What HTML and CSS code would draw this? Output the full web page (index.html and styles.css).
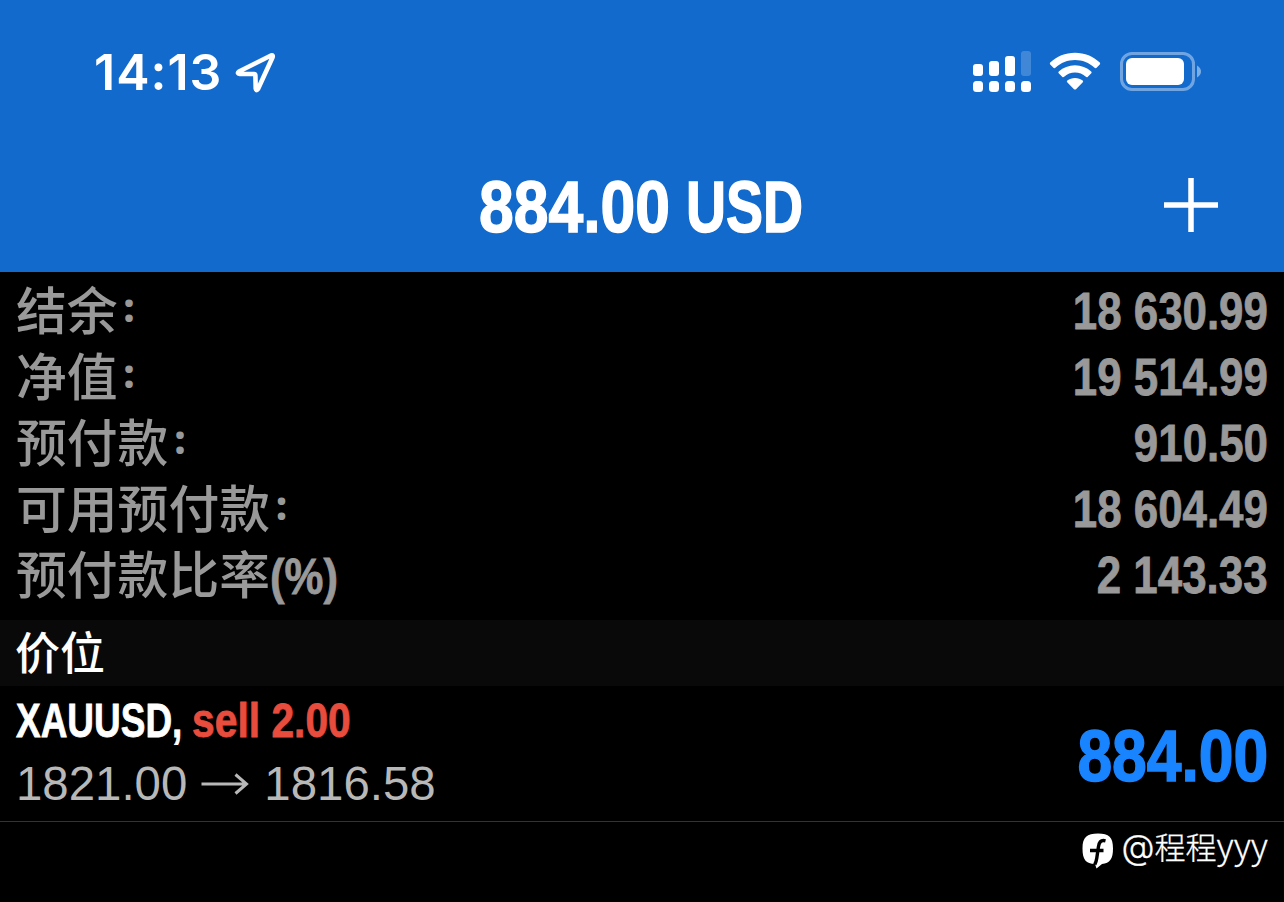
FILE: index.html
```
<!DOCTYPE html>
<html lang="zh-CN">
<head>
  <meta charset="UTF-8" />
  <meta name="viewport" content="width=device-width, initial-scale=1.0"/>
  <title>884.00 USD</title>
  <link rel="stylesheet" href="styles.css">
</head>
<body>
  <header class="header">
    <div class="status-bar">
      <div class="status-left">
        <span class="time">14:13</span>
        <svg class="location" width="44" height="44" viewBox="0 0 44 44">
          <path d="M6 21.500 L38 5.500 Q40.500 4.800 39.500 7.500 L25 39 Q23.300 41.500 22.700 38.500 L22.400 25.500 Q22.400 24 21 24 L7 24 Q3.500 23.400 6 21.500 Z" fill="none" stroke="#fff" stroke-width="4.600" stroke-linejoin="round"/>
        </svg>
      </div>
      <div class="status-right">
        <svg width="60" height="44" viewBox="0 0 60 44" fill="#fff">
          <rect x="1" y="14" width="10" height="12" rx="3"/>
          <rect x="17" y="11" width="10" height="15" rx="3"/>
          <rect x="33" y="6" width="10" height="20" rx="3"/>
          <rect x="49" y="1" width="10" height="25" rx="3" opacity="0.2"/>
          <rect x="1" y="31" width="10" height="11" rx="3.5"/>
          <rect x="17" y="31" width="10" height="11" rx="3.5"/>
          <rect x="33" y="31" width="10" height="11" rx="3.5"/>
          <rect x="49" y="31" width="10" height="11" rx="3.5"/>
        </svg>
        <svg class="wifi" width="52" height="44" viewBox="0 0 52 44" fill="#fff">
          <path d="M26 2.8 C16.500 2.8 7.500 6.500 1.200 12.600 Q.4 13.600 1.200 14.500 L4.700 17.900 Q5.500 18.500 6.400 17.700 C11.800 12.700 18.700 10 26 10 C33.300 10 40.200 12.700 45.600 17.700 Q46.500 18.500 47.300 17.900 L50.800 14.500 Q51.600 13.600 50.800 12.600 C44.500 6.500 35.500 2.800 26 2.800 Z"/>
          <path d="M26 15.300 C19.800 15.300 14.200 17.600 9.800 21.500 Q8.900 22.400 9.700 23.300 L13.400 26.900 Q14.200 27.500 15.100 26.800 C18.100 24.100 21.900 22.600 26 22.600 C30.100 22.600 33.900 24.100 36.900 26.800 Q37.800 27.500 38.600 26.900 L42.300 23.300 Q43.100 22.400 42.200 21.500 C37.800 17.600 32.200 15.300 26 15.300 Z"/>
          <path d="M26 27.900 C23.100 27.900 20.400 28.900 18.300 30.600 Q17.400 31.500 18.200 32.300 L25 39.200 Q26 40 27 39.200 L33.800 32.300 Q34.600 31.500 33.700 30.600 C31.600 28.900 28.900 27.900 26 27.900 Z"/>
        </svg>
        <svg class="battery" width="84" height="44" viewBox="0 0 84 44">
          <rect x="3.500" y="3.500" width="72" height="36" rx="10.500" fill="none" stroke="#fff" stroke-width="3" opacity="0.4"/>
          <rect x="8" y="8" width="58" height="27" rx="6" fill="#fff"/>
          <path d="M79 15.500 Q83 18 83 21.500 Q83 25 79 27.500 Z" fill="#fff" opacity="0.45"/>
        </svg>
      </div>
    </div>
    <div class="title-bar">
      <h1 class="title"><span class="cond title-num">884.00</span><span class="cond title-cur">USD</span></h1>
      <svg class="add" width="54" height="54" viewBox="0 0 54 54">
        <path d="M27 0 V54 M0 27 H54" stroke="#fff" stroke-width="5.500"/>
      </svg>
    </div>
  </header>

  <main>
    <div class="summary">
      <div class="row"><span class="label">结余<span class="colon">：</span></span><span class="value">18 630.99</span></div>
      <div class="row"><span class="label">净值<span class="colon">：</span></span><span class="value">19 514.99</span></div>
      <div class="row"><span class="label">预付款<span class="colon">：</span></span><span class="value">910.50</span></div>
      <div class="row"><span class="label">可用预付款<span class="colon">：</span></span><span class="value">18 604.49</span></div>
      <div class="row"><span class="label">预付款比率<span class="cond percent">(%)</span></span><span class="value">2 143.33</span></div>
    </div>

    <h2 class="section-title">价位</h2>

    <div class="position">
      <div class="position-info">
        <div class="order"><span class="cond symbol">XAUUSD,</span><span class="cond side">sell 2.00</span></div>
        <div class="prices">
          <span>1821.00</span>
          <svg class="arrow" width="48" height="24" viewBox="0 0 48 24">
            <path d="M0.500 12 H45 M34.500 2.500 L45.500 12 L34.500 21.500" fill="none" stroke="#b8b8b8" stroke-width="3"/>
          </svg>
          <span>1816.58</span>
        </div>
      </div>
      <div class="profit">884.00</div>
    </div>
  </main>

  <footer class="author">
    <svg width="32" height="36" viewBox="0 0 32 36">
      <path d="M16 .5 C27 .5 31 4 31 15.500 C31 26 28 30 20 31 L14.500 35.500 L13 31 C4 30.500 .5 27 .5 15.500 C.5 4 5 .5 16 .5 Z" fill="#fff"/>
      <path d="M23.500 7.800 C18.500 6.500 17 9.500 16.400 14 L14.800 25 Q14.400 28 12.800 31.500 M8 17.500 H21.500" fill="none" stroke="#000" stroke-width="3.400"/>
    </svg>
    <span class="author-name"><span class="at">@</span>程程<span class="nick">yyy</span></span>
  </footer>
</body>
</html>
```
FILE: styles.css
```
* {
  box-sizing: border-box;
}

body {
  margin: 0;
  min-height: 100vh;
  background: #000;
  color: #fff;
  font-family: "Liberation Sans", "Noto Sans CJK SC", sans-serif;
  overflow: hidden;
}

.header {
  height: 272px;
  background: #126acd;
}

.status-bar {
  display: flex;
  justify-content: space-between;
  padding: 50px 82px 0 94px;
  height: 138px;
}

.status-left,
.status-right {
  display: flex;
  height: 44px;
  align-items: center;
}

.time {
  width: 139px;
  font-family: Inter, sans-serif;
  font-size: 50px;
  font-weight: 600;
  line-height: 44px;
  letter-spacing: 1px;
}

.wifi {
  margin-left: 17px;
}

.battery {
  margin-left: 17px;
}

.title-bar {
  display: grid;
  grid-template-columns: 1fr auto 1fr;
  align-items: center;
  height: 134px;
  padding-right: 66px;
  padding-left: 66px;
}

/* condensed bold text, the width is set on each item */
.cond {
  display: inline-block;
  font-weight: bold;
  white-space: nowrap;
  transform-origin: left;
  -webkit-text-stroke: 0.8px;
}

.title {
  display: flex;
  grid-column: 2;
  width: 326px;
  height: 134px;
  margin: 0;
  font-size: 73px;
  line-height: 138px;
}

.title .cond {
  -webkit-text-stroke: 1.5px;
}

.title-num {
  width: 207px;
  transform: scaleX(0.855);
}

.title-cur {
  width: 119px;
  transform: scaleX(0.76);
}

.add {
  justify-self: end;
}

.summary {
  height: 348px;
  padding: 7px 16px 0;
  color: #999;
}

.row {
  display: flex;
  justify-content: space-between;
  height: 66px;
  line-height: 66px;
  font-size: 51px;
}

.label {
  font-size: 50.8px;
  font-weight: 500;
  line-height: 68px;
}

.colon {
  display: inline-block;
  margin-left: 4px;
  font-size: 30px;
  font-weight: 700;
  line-height: 1;
  vertical-align: 10px;
  -webkit-text-stroke: 1.8px;
}

.percent {
  transform: scaleX(0.86);
}

.value {
  font-weight: bold;
  transform: scaleX(0.86);
  transform-origin: right;
  -webkit-text-stroke: 0.8px;
}

.section-title {
  height: 66px;
  margin: 0;
  padding-left: 15px;
  background: #090909;
  font-size: 45px;
  font-weight: 500;
  line-height: 70px;
}

.position {
  display: flex;
  justify-content: space-between;
  height: 136px;
  padding: 0 16px;
  border-bottom: 1px solid #333;
}

.order {
  display: flex;
  height: 66px;
  font-size: 48px;
  line-height: 70px;
}

.symbol {
  width: 176px;
  transform: scaleX(0.77);
}

.side {
  color: #e84c3d;
  transform: scaleX(0.85);
}

.prices {
  display: flex;
  align-items: center;
  color: #b8b8b8;
  font-size: 47.4px;
  line-height: 64px;
}

.arrow {
  margin: 0 15px 0 14px;
}

.profit {
  color: #1984ff;
  font-size: 73px;
  font-weight: bold;
  line-height: 140px;
  transform: scaleX(0.855);
  transform-origin: right;
  -webkit-text-stroke: 1.5px;
}

.author {
  display: flex;
  justify-content: flex-end;
  align-items: center;
  gap: 8px;
  height: 58px;
  padding-right: 16px;
  font-family: Inter, "Noto Sans CJK SC", sans-serif;
  font-size: 31px;
  font-weight: 300;
}

.author-name {
  height: 50px;
  line-height: 43px;
  -webkit-text-stroke: 0.3px;
}

.at {
  font-size: 34px;
  line-height: 1;
}

.nick {
  font-family: "Noto Sans CJK SC", sans-serif;
  font-size: 35px;
  line-height: 1;
}
```
